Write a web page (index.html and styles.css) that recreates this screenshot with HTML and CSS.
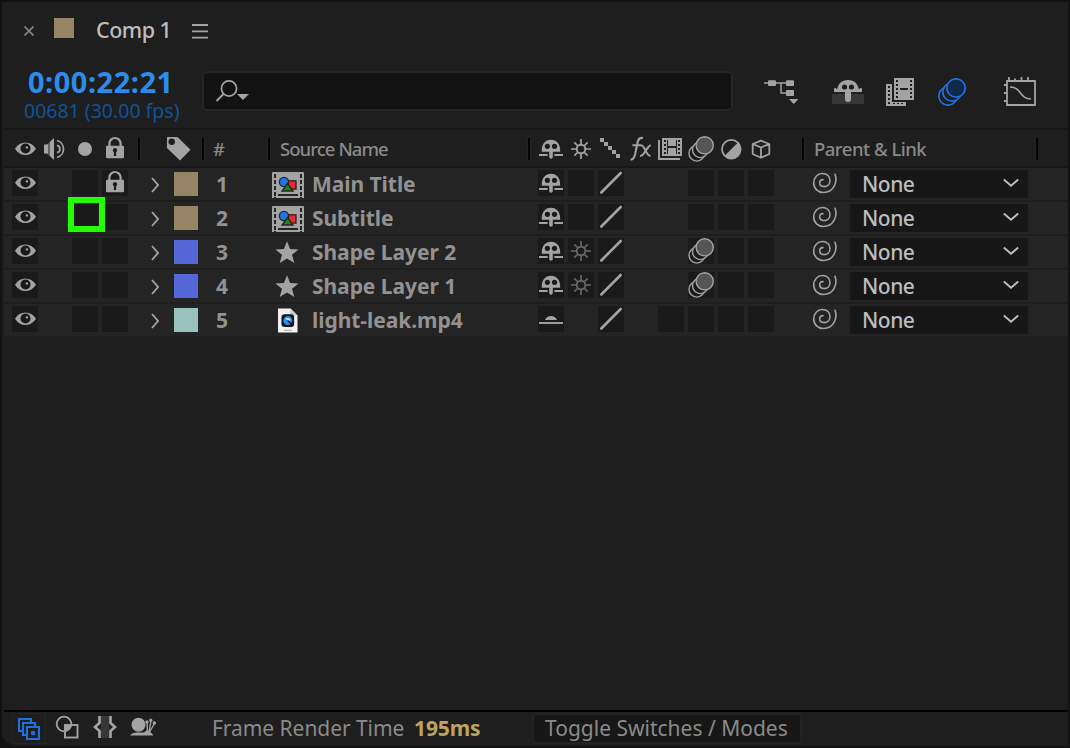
FILE: index.html
```html
<!DOCTYPE html>
<html lang="en">
<head>
    <meta charset="UTF-8">
    <meta name="viewport" content="width=device-width, initial-scale=1.0">
    <title>Comp 1</title>
    <link rel="stylesheet" href="styles.css">
</head>
<body>
    <svg class="defs" aria-hidden="true">
        <symbol id="eye" viewBox="0 0 26 26">
            <path d="M3 12.7C7.8 4.3 18.8 4.3 24 12.7C18.8 21.1 7.8 21.1 3 12.7Z" fill="currentColor"/>
            <circle cx="13.5" cy="12.5" r="5" fill="#1a1a1a"/>
            <circle cx="14.9" cy="11.4" r="1.2" fill="currentColor"/>
        </symbol>
        <symbol id="lock" viewBox="0 0 26 26">
            <path d="M7.4 11V7.6a5.6 5.6 0 0 1 11.2 0V11" fill="none" stroke="currentColor" stroke-width="2.2"/>
            <rect x="4" y="9.7" width="18" height="12.6" rx="1" fill="currentColor"/>
            <path d="M13 12a2.2 2.2 0 0 1 1.1 4.1V20h-2.2v-3.9A2.2 2.2 0 0 1 13 12Z" fill="#1a1a1a"/>
        </symbol>
        <symbol id="twirl" viewBox="0 0 10 18">
            <path d="M2 2L8 9L2 16" fill="none" stroke="currentColor" stroke-width="1.9"/>
        </symbol>
        <symbol id="shy" viewBox="0 0 26 26">
            <path d="M3.8 15.7C3.4 8.5 7 3.7 13 3.7s9.6 4.8 9.2 12H14.8V21a1.8 1.8 0 0 1-3.6 0V15.7Z" fill="currentColor"/>
            <circle cx="9.4" cy="10.3" r="2.6" fill="#1a1a1a"/>
            <circle cx="16.5" cy="10.3" r="2.6" fill="#1a1a1a"/>
            <path d="M1 19H9.6M16.4 19H25" stroke="currentColor" stroke-width="1.9"/>
        </symbol>
        <symbol id="shy-on" viewBox="0 0 26 26">
            <path d="M7 14c2-5.2 10-5.2 12 0Z" fill="currentColor"/>
            <path d="M1 17H25" stroke="currentColor" stroke-width="1.9"/>
        </symbol>
        <symbol id="sun" viewBox="0 0 26 26">
            <circle cx="13" cy="13" r="4.3" fill="none" stroke="currentColor" stroke-width="1.9"/>
            <path d="M13 3V9M13 17V23M3 13H9M17 13H23M6.3 6.3L10 10M16 16L19.7 19.7M6.3 19.7L10 16M16 10L19.7 6.3" stroke="currentColor" stroke-width="1.7"/>
        </symbol>
        <symbol id="slash" viewBox="0 0 26 26">
            <path d="M3.3 22.5L22.7 3" stroke="currentColor" stroke-width="2.6" stroke-linecap="round"/>
        </symbol>
        <symbol id="blur" viewBox="0 0 26 26">
            <g fill="#1a1a1a" stroke="currentColor" stroke-width="1.4">
                <circle cx="8.8" cy="17.3" r="7.8"/>
                <circle cx="12.3" cy="13.8" r="7.8"/>
                <circle cx="16.7" cy="9.3" r="8.6" fill="#555"/>
            </g>
        </symbol>
        <symbol id="spiral" viewBox="0 0 26 24">
            <path d="M23 3.2C26 12 21 21.5 11.5 21.5C6 21.5 1.7 17.5 1.7 12C1.7 6.5 5.5 2.5 10.5 2.5C15 2.5 18 5.5 18 9.5C18 13 15.5 15.6 12 15.6C9.5 15.6 7.7 14.2 7.7 11.8C7.7 9.7 9 8.5 11 8.6" fill="none" stroke="currentColor" stroke-width="1.6" stroke-linecap="round"/>
        </symbol>
        <symbol id="down" viewBox="0 0 16 10">
            <path d="M.8 1.5L8 7.8L15.2 1.5" fill="none" stroke="currentColor" stroke-width="1.9"/>
        </symbol>
        <symbol id="comp" viewBox="0 0 32 26">
            <path d="M1 0H31a1 1 0 0 1 1 1V26H30V25H28V26H4V25H2V26H0V1A1 1 0 0 1 1 0Z" fill="#a3a3a3"/>
            <path d="M2 2h2v4H2zM2 8h2v4H2zM2 14h2v4H2zM2 20h2v4H2zM28 2h2v4h-2zM28 8h2v4h-2zM28 14h2v4h-2zM28 20h2v4h-2zM6 22H26v2H6z" fill="#242424"/>
            <g stroke="#242424" stroke-width="1.3">
                <rect x="15.5" y="8.8" width="8.5" height="8.3" fill="#ee2430"/>
                <circle cx="12" cy="10" r="4.6" fill="#2074ec"/>
                <path d="M15.5 11.5L21 19H10Z" fill="#128a12"/>
            </g>
        </symbol>
        <symbol id="star" viewBox="0 0 32 26">
            <path d="M15 1.2L18.1 9L26.6 9.5L20 14.8L22.3 23L15 18.4L7.7 23L10 14.8L3.4 9.5L11.9 9Z" fill="#a3a3a3"/>
        </symbol>
        <symbol id="movie" viewBox="0 0 32 26">
            <path d="M6 .5H18.5L25.5 7.5V24.5H6Z" fill="#f1f1f1"/>
            <path d="M18.5 .5V7.5H25.5Z" fill="#c9c9c9"/>
            <rect x="9.5" y="6.3" width="12.6" height="12.6" rx="3" fill="#15161c"/>
            <circle cx="15.8" cy="12.6" r="4.5" fill="#288cf0"/>
            <path d="M13 10.8a4 4 0 0 1 5.8 1.2L17 13Z" fill="#b5e6ff"/>
            <path d="M15.6 12.4L19.5 16" stroke="#15161c" stroke-width="1.4"/>
            <path d="M12 22.3H20" stroke="#aaa" stroke-width="1.3" stroke-dasharray="1.6 .6"/>
        </symbol>
    </svg>

    <main class="panel">
        <div class="tab">
            <svg class="close" viewBox="0 0 12 12"><path d="M1.5 1.5L10.5 10.5M10.5 1.5L1.5 10.5" stroke="currentColor" stroke-width="1.7"/></svg>
            <span class="tab-swatch"></span>
            <h1>Comp 1</h1>
            <svg class="menu" viewBox="0 0 18 16"><path d="M1 2H17M1 8.3H17M1 14.6H17" stroke="currentColor" stroke-width="1.8"/></svg>
        </div>

        <header class="toolbar">
            <div class="time">
                <time>0:00:22:21</time>
                <span>00681 (30.00 fps)</span>
            </div>
            <div class="search">
                <svg viewBox="0 0 34 24"><circle cx="14" cy="9.5" r="7.6" fill="none" stroke="currentColor" stroke-width="1.7"/><path d="M8.5 15L1.5 22" stroke="currentColor" stroke-width="2"/><path d="M22 15H34L28 21Z" fill="currentColor"/></svg>
            </div>
            <div class="tools">
                <svg class="flow" viewBox="0 0 34 28"><path d="M0 5H22M17 5V15H23" fill="none" stroke="currentColor" stroke-width="1.5"/><rect x="4" y="2.2" width="8" height="5.8" rx="1" fill="currentColor"/><rect x="22" y="2.2" width="8" height="5.8" rx="1" fill="currentColor"/><rect x="22" y="12" width="8" height="6" rx="1" fill="currentColor"/><path d="M25 21H34.5L29.7 26Z" fill="currentColor"/></svg>
                <svg class="hide-shy" viewBox="0 0 32 28"><path d="M0 14H32V24H0Z" fill="#373737"/><path d="M2 12V9.5C2 7.5 4.5 7.5 5 10C6 3.5 10 0 16 0S26 3.5 27 10C27.5 7.5 30 7.5 30 9.5V12H19V19a3 3 0 0 1-6 0V12Z" fill="currentColor"/><circle cx="12.5" cy="7" r="2.6" fill="#1e1e1e"/><circle cx="19.5" cy="7" r="2.6" fill="#1e1e1e"/></svg>
                <svg class="frames" viewBox="0 0 28 28"><path d="M0 6H6V24H20V28H0Z" fill="currentColor"/><path d="M8 0H28V22H8Z" fill="currentColor"/><path d="M2 8h2v2H2zM2 12h2v2H2zM2 16h2v2H2zM2 20h2v2H2zM2 24h2v2H2zM7 25h2v1H7zM11 25h2v1h-2zM15 25h2v1h-2zM10 2h2v2h-2zM10 6h2v2h-2zM10 10h2v2h-2zM10 14h2v2h-2zM10 18h2v2h-2zM24 2h2v2h-2zM24 6h2v2h-2zM24 10h2v2h-2zM24 14h2v2h-2zM24 18h2v2h-2zM14 10h8v2h-8z" fill="#1e1e1e"/></svg>
                <svg class="motion" viewBox="0 0 28 28"><g fill="#1e1e1e" stroke="#2070e0" stroke-width="1.7"><circle cx="10" cy="18" r="9.2"/><circle cx="14" cy="14" r="9.2"/><circle cx="18" cy="10" r="9.2" fill="#10294a"/></g></svg>
                <svg class="graph" viewBox="0 0 32 30"><path d="M3 5H31V29H3ZM5 5V1M11 5V2.5M17.5 5V1M24 5V1M3 9H0M3 17H0M3 25H0" fill="none" stroke="currentColor" stroke-width="1.8"/><path d="M6 11C18 11 15 23 27 23" fill="none" stroke="currentColor" stroke-width="1.7"/></svg>
            </div>
        </header>

        <div class="columns">
            <div class="col av">
                <svg><use href="#eye"/></svg>
                <svg viewBox="0 0 26 26"><path d="M2 8.5H5L12 2V24L5 17.5H2Z" fill="currentColor"/><path d="M7 5V21" stroke="#1e1e1e" stroke-width="1"/><path d="M15 9.3a3.8 3.8 0 0 1 0 7.4M15 4.5a8.8 8.8 0 0 1 0 17" fill="none" stroke="currentColor" stroke-width="1.7"/></svg>
                <svg viewBox="0 0 26 26"><circle cx="13" cy="13" r="7" fill="currentColor"/></svg>
                <svg><use href="#lock"/></svg>
            </div>
            <div class="col label">
                <svg viewBox="0 0 26 26"><path d="M2 1H11.5Q12.5 1 13.5 2L25.5 13.8L15 24.5L2 12Z" fill="currentColor"/><circle cx="6.7" cy="5.8" r="3.2" fill="#1e1e1e"/></svg>
            </div>
            <div class="col num"><span>#</span></div>
            <div class="col source"><span>Source Name</span></div>
            <div class="col switches">
                <svg><use href="#shy"/></svg>
                <svg><use href="#sun"/></svg>
                <svg viewBox="0 0 26 26"><path d="M2 2h4v4H2zM6 6h4v4H6zM10 10h4v4h-4zM14 14h4v4h-4zM18 18h4v4h-4z" fill="currentColor"/></svg>
                <svg viewBox="0 0 26 26"><path d="M2.5 23.5C5.5 24 6.5 21 7.3 17.5L9.5 6.5C10.3 3 12 1.4 15 2M4.5 9.2H13.5M13 9.5C17 8.5 18 21 22.5 19.5M22.8 9.2C19 9.5 16.5 20.5 12 20" fill="none" stroke="currentColor" stroke-width="2.1"/></svg>
                <svg viewBox="0 0 26 26"><path d="M1 4V23H22" fill="none" stroke="currentColor" stroke-width="1.9"/><path d="M4 2H24V20H4Z" fill="currentColor"/><path d="M6 4h2v2H6zM6 8h2v2H6zM6 12h2v2H6zM6 16h2v2H6zM20 4h2v2h-2zM20 8h2v2h-2zM20 12h2v2h-2zM20 16h2v2h-2zM9 4h1v14H9zM18 4h1v14h-1zM10 10H18V12H10z" fill="#1e1e1e"/></svg>
                <svg><use href="#blur"/></svg>
                <svg viewBox="0 0 26 26"><circle cx="13.3" cy="13.2" r="9.3" fill="none" stroke="currentColor" stroke-width="1.8"/><path d="M19.9 6.6A9.3 9.3 0 0 1 6.7 19.8Z" fill="currentColor"/></svg>
                <svg viewBox="0 0 26 26"><path d="M13 4.7L21.3 8V18L13 21.7L4.7 18V8ZM4.7 8L13 11.5L21.3 8M13 11.5V21.7" fill="none" stroke="currentColor" stroke-width="1.8" stroke-linejoin="round"/></svg>
            </div>
            <div class="col parent"><span>Parent &amp; Link</span></div>
            <div class="col rest"></div>
        </div>

        <section class="layers">
            <div class="layer">
                <span class="cell"><svg><use href="#eye"/></svg></span>
                <span></span>
                <span class="cell"></span>
                <span class="cell"><svg><use href="#lock"/></svg></span>
                <svg class="twirl"><use href="#twirl"/></svg>
                <span class="swatch sand"></span>
                <b class="index">1</b>
                <svg class="kind"><use href="#comp"/></svg>
                <b>Main Title</b>
                <span class="cell"><svg><use href="#shy"/></svg></span>
                <span class="cell"></span>
                <span class="cell"><svg><use href="#slash"/></svg></span>
                <span></span>
                <span></span>
                <span class="cell"></span>
                <span class="cell"></span>
                <span class="cell"></span>
                <svg class="spiral"><use href="#spiral"/></svg>
                <span class="select">None <svg><use href="#down"/></svg></span>
            </div>
            <div class="layer">
                <span class="cell"><svg><use href="#eye"/></svg></span>
                <span></span>
                <span class="cell marked"></span>
                <span class="cell"></span>
                <svg class="twirl"><use href="#twirl"/></svg>
                <span class="swatch sand"></span>
                <b class="index">2</b>
                <svg class="kind"><use href="#comp"/></svg>
                <b>Subtitle</b>
                <span class="cell"><svg><use href="#shy"/></svg></span>
                <span class="cell"></span>
                <span class="cell"><svg><use href="#slash"/></svg></span>
                <span></span>
                <span></span>
                <span class="cell"></span>
                <span class="cell"></span>
                <span class="cell"></span>
                <svg class="spiral"><use href="#spiral"/></svg>
                <span class="select">None <svg><use href="#down"/></svg></span>
            </div>
            <div class="layer">
                <span class="cell"><svg><use href="#eye"/></svg></span>
                <span></span>
                <span class="cell"></span>
                <span class="cell"></span>
                <svg class="twirl"><use href="#twirl"/></svg>
                <span class="swatch blue"></span>
                <b class="index">3</b>
                <svg class="kind"><use href="#star"/></svg>
                <b>Shape Layer 2</b>
                <span class="cell"><svg><use href="#shy"/></svg></span>
                <span class="cell dim"><svg><use href="#sun"/></svg></span>
                <span class="cell"><svg><use href="#slash"/></svg></span>
                <span></span>
                <span></span>
                <span class="cell"><svg><use href="#blur"/></svg></span>
                <span class="cell"></span>
                <span class="cell"></span>
                <svg class="spiral"><use href="#spiral"/></svg>
                <span class="select">None <svg><use href="#down"/></svg></span>
            </div>
            <div class="layer">
                <span class="cell"><svg><use href="#eye"/></svg></span>
                <span></span>
                <span class="cell"></span>
                <span class="cell"></span>
                <svg class="twirl"><use href="#twirl"/></svg>
                <span class="swatch blue"></span>
                <b class="index">4</b>
                <svg class="kind"><use href="#star"/></svg>
                <b>Shape Layer 1</b>
                <span class="cell"><svg><use href="#shy"/></svg></span>
                <span class="cell dim"><svg><use href="#sun"/></svg></span>
                <span class="cell"><svg><use href="#slash"/></svg></span>
                <span></span>
                <span></span>
                <span class="cell"><svg><use href="#blur"/></svg></span>
                <span class="cell"></span>
                <span class="cell"></span>
                <svg class="spiral"><use href="#spiral"/></svg>
                <span class="select">None <svg><use href="#down"/></svg></span>
            </div>
            <div class="layer">
                <span class="cell"><svg><use href="#eye"/></svg></span>
                <span></span>
                <span class="cell"></span>
                <span class="cell"></span>
                <svg class="twirl"><use href="#twirl"/></svg>
                <span class="swatch aqua"></span>
                <b class="index">5</b>
                <svg class="kind"><use href="#movie"/></svg>
                <b>light-leak.mp4</b>
                <span class="cell"><svg><use href="#shy-on"/></svg></span>
                <span></span>
                <span class="cell"><svg><use href="#slash"/></svg></span>
                <span></span>
                <span class="cell"></span>
                <span class="cell"></span>
                <span class="cell"></span>
                <span class="cell"></span>
                <svg class="spiral"><use href="#spiral"/></svg>
                <span class="select">None <svg><use href="#down"/></svg></span>
            </div>
        </section>

        <footer class="status">
            <div class="panes">
                <span class="pane active"><svg viewBox="0 0 24 24"><g fill="#1e1e1e" stroke="#2070e0" stroke-width="2"><rect x="2" y="1" width="12" height="12"/><rect x="6" y="5" width="12" height="12"/><rect x="10" y="9" width="12" height="12"/></g><circle cx="16" cy="15" r="2.2" fill="#2070e0"/></svg></span>
                <svg viewBox="0 0 24 24"><circle cx="9" cy="9" r="7.3" fill="none" stroke="currentColor" stroke-width="1.8"/><rect x="10" y="10" width="12.5" height="12.5" fill="none" stroke="currentColor" stroke-width="1.9"/><path d="M10 10H16.3A7.3 7.3 0 0 1 10 16.3Z" fill="currentColor"/></svg>
                <svg viewBox="0 0 24 24"><path d="M8 1H16V23H8Z" fill="#373737"/><path d="M6.5 1V8L2 12L6.5 16V23M17.5 1V8L22 12L17.5 16V23" fill="none" stroke="currentColor" stroke-width="2.7"/></svg>
                <svg class="snail" viewBox="0 0 27 24"><circle cx="8.5" cy="9.8" r="7" fill="currentColor"/><path d="M0 20.5Q2 17.5 7 17.5H14L17 15L21.5 18L23.5 20.5Z" fill="currentColor"/><path d="M17.5 17L17 6M19 17L21 5.5M19.5 17L24.5 8.5" stroke="currentColor" stroke-width="1.4"/><circle cx="17" cy="7" r="1.7" fill="currentColor"/><circle cx="20.8" cy="5.2" r="1.6" fill="currentColor"/><circle cx="24.3" cy="8" r="1.7" fill="currentColor"/></svg>
            </div>
            <span class="render">Frame Render Time</span>
            <b class="ms">195ms</b>
            <span class="toggle">Toggle Switches / Modes</span>
        </footer>
    </main>
</body>
</html>
```

FILE: styles.css
```css
*, ::after {
    box-sizing: border-box;
}
html {
    font-family: 'Noto Sans', 'Open Sans', sans-serif;
    font-size: 21px;
    color: #a3a3a3;
}
body {
    height: 748px;
    margin: 0;
    padding: 2px;
    background: #121212;
    overflow: hidden;
}
svg {
    display: block;
    flex: none;
}
.defs {
    position: absolute;
    width: 0;
    height: 0;
}
.panel {
    display: flex;
    flex-direction: column;
    height: 744px;
    padding-left: 2px;
    background: #1e1e1e;
    border-radius: 0 0 0 14px;
    white-space: nowrap;
}

/* tab */
.tab {
    display: flex;
    align-items: center;
    height: 56px;
    padding-left: 19px;
}
.close {
    width: 12px;
    height: 12px;
    margin-top: 2px;
    color: #8c8c8c;
}
.tab-swatch {
    width: 20px;
    height: 20px;
    margin: -4px 22px 0 19px;
    background: #978467;
}
h1 {
    width: 95px;
    margin: -2px 0 0;
    font-size: 21.5px;
    font-weight: 500;
    letter-spacing: -.5px;
    color: #bdbdbd;
}
.menu {
    width: 18px;
    height: 16px;
    margin-top: 2px;
}

/* toolbar */
.toolbar {
    display: flex;
    height: 70px;
}
.time {
    width: 200px;
    padding: 7px 0 0 20px;
}
.time time {
    display: block;
    padding-left: 4px;
    font-size: 29px;
    line-height: 34px;
    font-weight: 700;
    letter-spacing: .5px;
    color: #2d8ceb;
}
.time span {
    display: block;
    font-size: 19.5px;
    line-height: 24px;
    letter-spacing: 0;
    color: #125296;
}
.search {
    width: 531px;
    height: 40px;
    margin: 13px 1px 0 -2px;
    padding: 6px 0 0 11px;
    border: 2px solid #252525;
    border-radius: 5px;
    background: #121212;
}
.search svg {
    width: 34px;
    height: 24px;
}
.tools {
    display: flex;
    padding-top: 20px;
}
.flow {
    width: 34px;
    height: 28px;
    margin-left: 30px;
}
.hide-shy {
    width: 32px;
    height: 28px;
    margin: 2px 0 0 34px;
}
.frames {
    width: 28px;
    height: 28px;
    margin-left: 22px;
}
.motion {
    width: 28px;
    height: 28px;
    margin-left: 24px;
}
.graph {
    width: 32px;
    height: 30px;
    margin: -2px 0 0 38px;
}

/* column heads */
.columns {
    display: flex;
    align-items: center;
    height: 40px;
    padding-left: 8px;
    border-top: 2px solid #171717;
    border-bottom: 2px solid #171717;
}
.col {
    display: flex;
    align-items: center;
    height: 22px;
    margin-top: 2px;
    border-left: 2px solid #050505;
    box-shadow: inset 1px 0 #242424, -1px 0 #242424;
    font-size: 18.5px;
    font-weight: 500;
    color: #8a8a8a;
}
.col svg {
    width: 26px;
    height: 26px;
    color: #a3a3a3;
}
.col span {
    margin-top: -2px;
}
.av {
    width: 126px;
    gap: 4px;
    border: 0;
    box-shadow: none;
}
.label {
    width: 64px;
    padding-left: 25px;
}
.num {
    width: 66px;
    padding-left: 9px;
}
.source {
    width: 260px;
    padding-left: 10px;
    letter-spacing: -.95px;
}
.switches {
    width: 274px;
    padding-left: 8px;
    gap: 4px;
}
.parent {
    width: 234px;
    padding-left: 10px;
    letter-spacing: -.5px;
}

/* layers */
.layers {
    flex: 1;
}
.layer {
    display: grid;
    grid-template-columns: 30px 30px 30px 30px 42px 43px 55px 40px 226px repeat(8, 30px) 35px 37px 178px;
    height: 32px;
    margin-bottom: 2px;
    padding-left: 8px;
    background: #242424;
    line-height: 32px;
}
.layer b {
    font-weight: 700;
    letter-spacing: -.05px;
    color: #929292;
}
.layer .index {
    margin-left: -1px;
}
.cell {
    width: 26px;
    height: 26px;
    margin-top: 2px;
    background: #1a1a1a;
}
.cell svg {
    width: 26px;
    height: 26px;
}
.dim {
    color: #666;
}
/* highlight drawn over the solo switch */
.marked {
    position: relative;
}
.marked::after {
    content: '';
    position: absolute;
    left: -4px;
    top: -7px;
    z-index: 1;
    width: 37px;
    height: 35px;
    border: 6px solid #22ff00;
}
.twirl {
    width: 10px;
    height: 18px;
    margin: 8px 0 0 18px;
}
.swatch {
    width: 24px;
    height: 24px;
    margin-top: 4px;
}
.sand {
    background: #978467;
}
.blue {
    background: #5566d6;
}
.aqua {
    background: #9bc1bd;
}
.kind {
    width: 32px;
    height: 26px;
    margin-top: 4px;
}
.spiral {
    grid-column: 19;
    width: 26px;
    height: 24px;
    margin: 3px 0 0 -1px;
}
.select {
    display: flex;
    justify-content: space-between;
    height: 28px;
    margin-top: 2px;
    padding: 0 9px 0 12px;
    background: #171717;
    line-height: 28px;
    font-weight: 500;
    letter-spacing: -.5px;
    color: #bdbdbd;
}
.select svg {
    width: 16px;
    height: 10px;
    margin-top: 8px;
}

/* status bar */
.status {
    display: flex;
    height: 36px;
    border-top: 2px solid #000;
    line-height: 32px;
    color: #8a8a8a;
}
.panes {
    display: flex;
    width: 208px;
    padding: 1px 0 0 8px;
    gap: 14px;
    color: #a3a3a3;
}
.panes svg {
    width: 24px;
    height: 24px;
    margin-top: 2px;
}
.panes .snail {
    width: 27px;
    margin-left: -1px;
}
.pane {
    width: 34px;
    height: 31px;
    margin-right: -5px;
    padding: 2px 0 0 4px;
    border: 1px solid #252525;
}
.render {
    width: 202px;
    letter-spacing: -.05px;
}
.ms {
    width: 118px;
    font-weight: 700;
    letter-spacing: -.1px;
    color: #bfa35f;
}
.toggle {
    width: 270px;
    height: 31px;
    margin-top: 1px;
    padding-left: 11px;
    border: 2px solid #232323;
    border-radius: 4px;
    background: #171717;
    line-height: 27px;
}
```
